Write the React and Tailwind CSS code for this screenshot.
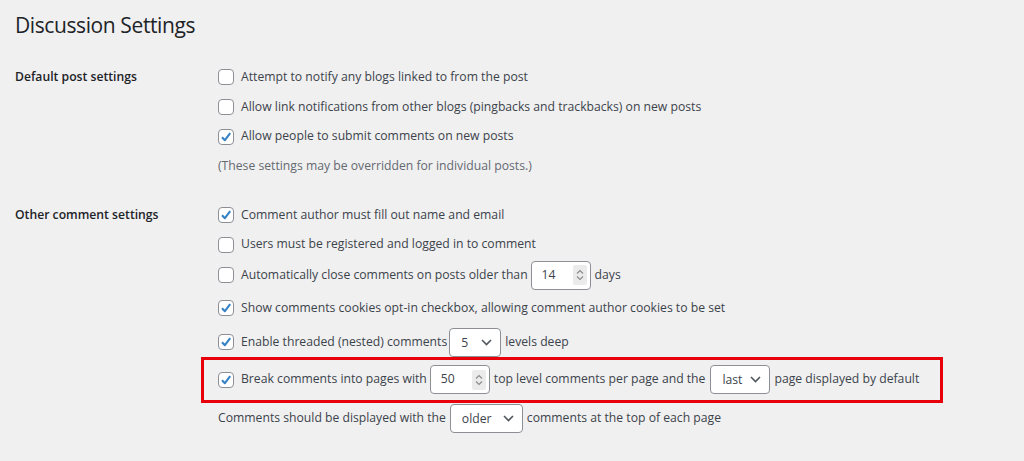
import React from "react";

const font = { fontFamily: '"Open Sans", "Noto Sans", Arial, sans-serif' };

function Check({ checked }) {
  return (
    <span className="inline-flex w-[16px] h-[16px] shrink-0 items-center justify-center rounded-[4px] border border-[#8c8f94] bg-white mr-[7px]">
      {checked && (
        <svg width="14" height="14" viewBox="0 0 14 14">
          <path d="M3 7.2 L5.9 10.2 L11.2 3.2" fill="none" stroke="#3582c4" strokeWidth="2.1" strokeLinejoin="round" />
        </svg>
      )}
    </span>
  );
}

function NumInput({ value, w = "w-[60px]" }) {
  return (
    <span className={`inline-flex items-center ${w} h-[29px] rounded-[4px] border border-[#8c8f94] bg-white ml-[3px] mr-[4px] pl-[10px] pr-[3px] justify-between`}>
      <span>{value}</span>
      <span className="flex flex-col items-center justify-center w-[14px] h-[20px] bg-[#ebebeb] rounded-[2px]">
        <svg width="8" height="14" viewBox="0 0 8 14">
          <path d="M1 5.5 L4 2.5 L7 5.5" fill="none" stroke="#8a8a8a" strokeWidth="1.1" />
          <path d="M1 8.5 L4 11.5 L7 8.5" fill="none" stroke="#8a8a8a" strokeWidth="1.1" />
        </svg>
      </span>
    </span>
  );
}

function Select({ value, w, ml = "ml-[4px]" }) {
  return (
    <span className={`inline-flex items-center ${w} h-[29px] rounded-[4px] border border-[#8c8f94] bg-white ${ml} mr-[4px] pl-[11px] pr-[8px] justify-between`}>
      <span className="pt-[2px]">{value}</span>
      <svg width="11" height="7" viewBox="0 0 11 7">
        <path d="M1 1 L5.5 5.5 L10 1" fill="none" stroke="#50575e" strokeWidth="1.6" />
      </svg>
    </span>
  );
}

function Row({ h, children }) {
  return <div className={`flex items-center ${h} whitespace-nowrap`}>{children}</div>;
}

export default function App() {
  return (
    <div className="w-[1024px] h-[461px] bg-[#f0f0f1] text-[#3c434a] text-[12.2px] overflow-hidden" style={font}>
      <div className="pl-[15px] pt-[11px] h-[62px]">
        <h1 className="text-[21px] leading-[28px] tracking-[-0.4px] text-[#1d2327] font-normal">Discussion Settings</h1>
      </div>

      <div className="flex">
        <div className="w-[203px] pl-[15px] shrink-0">
          <div className="h-[30px] flex items-center font-semibold text-[#1d2327]">Default post settings</div>
        </div>
        <div className="pl-[15px] flex flex-col">
          <Row h="h-[30px]"><Check />Attempt to notify any blogs linked to from the post</Row>
          <Row h="h-[30px]"><Check />Allow link notifications from other blogs (pingbacks and trackbacks) on new posts</Row>
          <Row h="h-[29px]"><Check checked />Allow people to submit comments on new posts</Row>
          <Row h="h-[30px]"><span className="text-[#646970]">(These settings may be overridden for individual posts.)</span></Row>
        </div>
      </div>

      <div className="flex mt-[19px]">
        <div className="w-[203px] pl-[15px] shrink-0">
          <div className="h-[30px] flex items-center font-semibold text-[#1d2327]">Other comment settings</div>
        </div>
        <div className="pl-[15px] flex flex-col">
          <Row h="h-[30px]"><Check checked />Comment author must fill out name and email</Row>
          <Row h="h-[29px]"><Check />Users must be registered and logged in to comment</Row>
          <Row h="h-[32px]"><Check />Automatically close comments on posts older than<NumInput value="14" />days</Row>
          <Row h="h-[34px]"><Check checked />Show comments cookies opt-in checkbox, allowing comment author cookies to be set</Row>
          <Row h="h-[34px]"><Check checked />Enable threaded (nested) comments<Select value="5" w="w-[52px]" ml="ml-[2px]" />levels deep</Row>
          <div className="relative">
            <Row h="h-[41px]"><Check checked />Break comments into pages with<NumInput value="50" />top level comments per page and the<Select value="last" w="w-[60px]" ml="ml-[5px]" />page displayed by default</Row>
            <div className="absolute left-[-17px] top-[-2px] w-[742px] h-[46px] border-[3px] border-[#e8000b]" />
          </div>
          <Row h="h-[37px]">Comments should be displayed with the<Select value="older" w="w-[73px]" />comments at the top of each page</Row>
        </div>
      </div>
    </div>
  );
}
